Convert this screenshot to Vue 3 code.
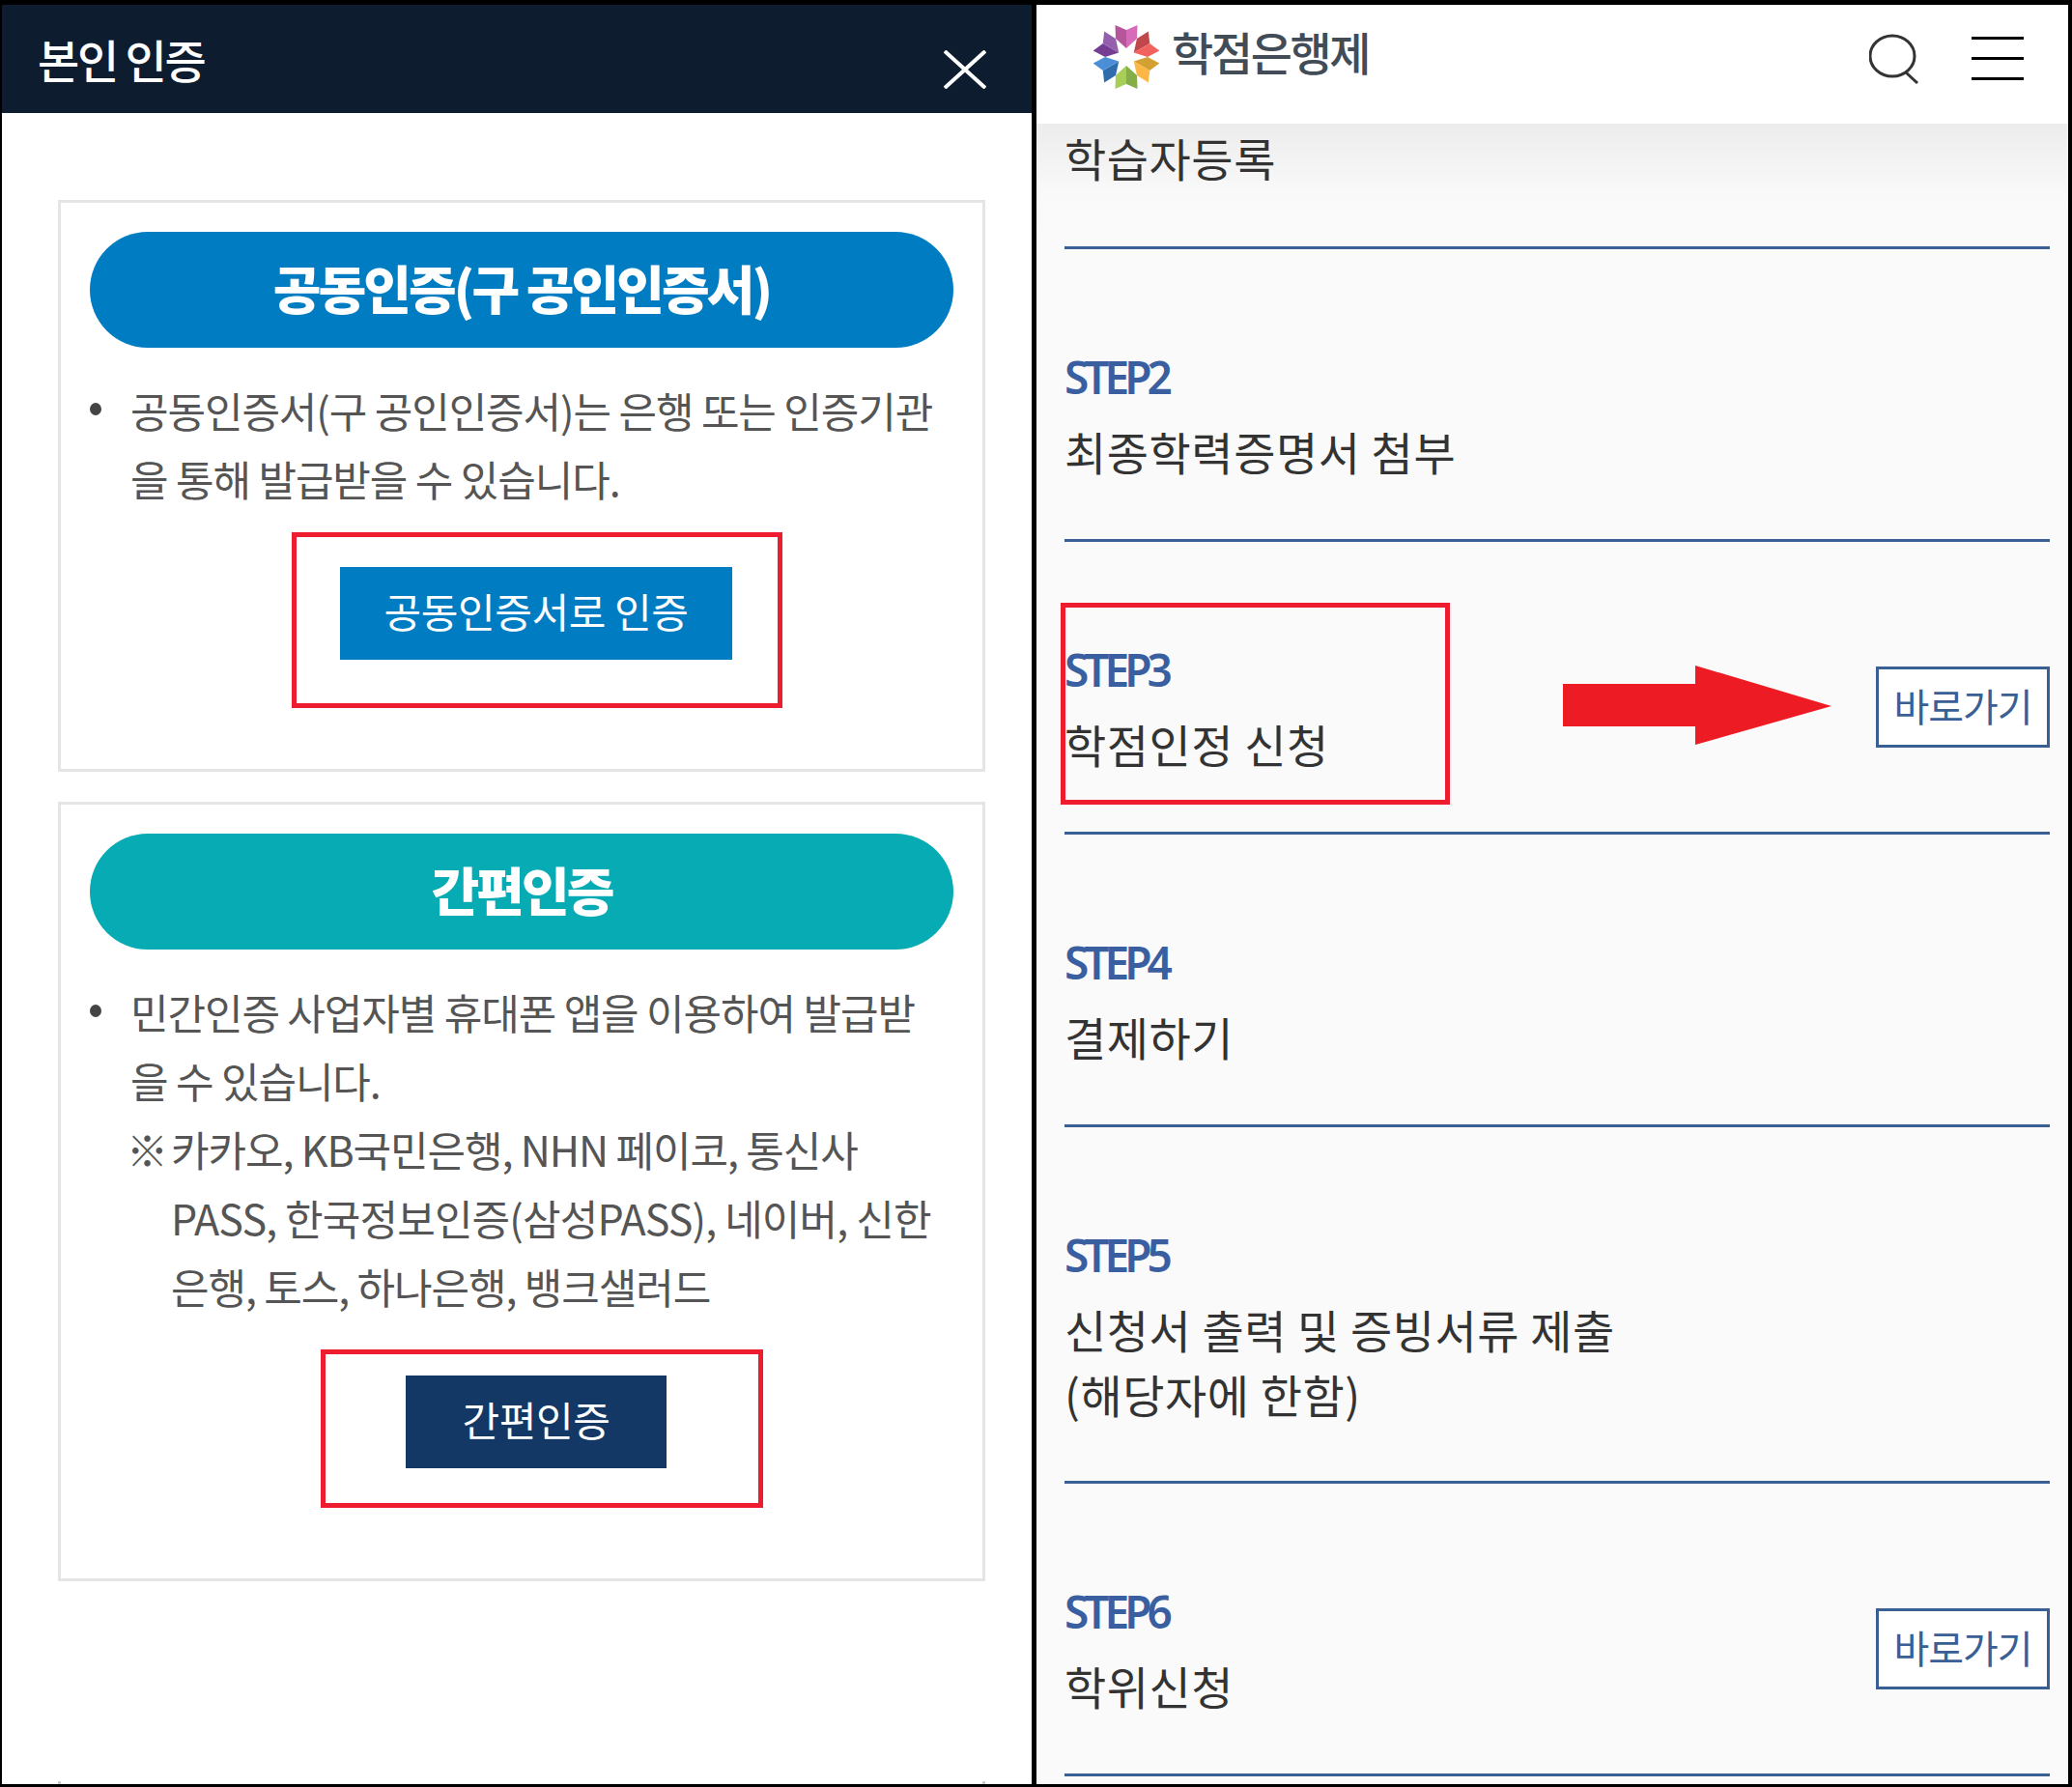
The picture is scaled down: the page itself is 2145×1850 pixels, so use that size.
<script setup>
const petals = [
  { r: 0, a: '#b5559a', b: '#d66cb8' },
  { r: 60, a: '#c2474c', b: '#f2635f' },
  { r: 120, a: '#d3a032', b: '#fdb747' },
  { r: 180, a: '#85ae48', b: '#a7cf57' },
  { r: 240, a: '#2f6cae', b: '#4a8fd6' },
  { r: 300, a: '#753e92', b: '#9460ad' },
]
const firstLines = ['공동인증서(구 공인인증서)는 은행 또는 인증기관', '을 통해 발급받을 수 있습니다.']
const secondLines = ['민간인증 사업자별 휴대폰 앱을 이용하여 발급받', '을 수 있습니다.']
const noteLines = ['카카오, KB국민은행, NHN 페이코, 통신사', 'PASS, 한국정보인증(삼성PASS), 네이버, 신한', '은행, 토스, 하나은행, 뱅크샐러드']
const steps = [
  { id: 2, lines: ['최종학력증명서 첨부'] },
  { id: 3, lines: ['학점인정 신청'], link: true, mark: true },
  { id: 4, lines: ['결제하기'] },
  { id: 5, lines: ['신청서 출력 및 증빙서류 제출', '(해당자에 한함)'], tall: true },
  { id: 6, lines: ['학위신청'], link: true },
]
</script>

<template>
  <div class="frame">
    <section class="left">
      <header class="modal-head">
        <h1>본인 인증</h1>
        <svg class="close" viewBox="0 0 44 40" width="44" height="40">
          <path d="M1 1 L43 39 M43 1 L1 39" stroke="#fff" stroke-width="4" fill="none" />
        </svg>
      </header>
      <div class="modal-body">
        <div class="card card-one">
          <div class="pill pill-blue">공동인증(구 공인인증서)</div>
          <div class="bullet-block">
            <i class="dot"></i>
            <p v-for="l in firstLines" :key="l">{{ l }}</p>
          </div>
          <div class="mark mark-one"><a class="btn btn-blue">공동인증서로 인증</a></div>
        </div>
        <div class="card card-two">
          <div class="pill pill-teal">간편인증</div>
          <div class="bullet-block">
            <i class="dot"></i>
            <p v-for="l in secondLines" :key="l">{{ l }}</p>
            <div class="note">
              <span class="ref">※</span>
              <p v-for="l in noteLines" :key="l">{{ l }}</p>
            </div>
          </div>
          <div class="mark mark-two"><a class="btn btn-navy">간편인증</a></div>
        </div>
        <div class="stub"></div>
      </div>
    </section>

    <section class="right">
      <header class="site-head">
        <div class="logo">
          <svg viewBox="-36 -36 72 72" width="72" height="72">
            <g v-for="p in petals" :key="p.r" :transform="`rotate(${p.r})`">
              <polygon points="0,-9 0,-28 -11.5,-33 -11,-19" :fill="p.a" />
              <polygon points="0,-9 0,-28 11.5,-33 11,-19" :fill="p.b" />
            </g>
          </svg>
          <span>학점은행제</span>
        </div>
        <div class="head-icons">
          <svg viewBox="0 0 52 52" width="52" height="52">
            <ellipse cx="24" cy="23" rx="23" ry="21" fill="none" stroke="#333" stroke-width="3" />
            <path d="M38 40 L50 51" stroke="#333" stroke-width="3" fill="none" />
          </svg>
          <div class="burger"><i></i><i></i><i></i></div>
        </div>
      </header>
      <div class="steps">
        <div class="step first"><p class="label">학습자등록</p></div>
        <div v-for="s in steps" :key="s.id" class="step" :class="{ tall: s.tall }">
          <div class="step-text">
            <b class="step-no">STEP{{ s.id }}</b>
            <p v-for="l in s.lines" :key="l" class="label">{{ l }}</p>
          </div>
          <template v-if="s.mark">
            <div class="step-mark"></div>
            <svg class="arrow" viewBox="0 0 278 82" width="278" height="82">
              <path d="M0 19 H137 V0 L278 42 L137 82 V63 H0 Z" fill="#ed1c24" />
            </svg>
          </template>
          <a v-if="s.link" class="go">바로가기</a>
        </div>
      </div>
    </section>
  </div>
</template>

<style>
html, body { margin: 0; background: #000; }
</style>

<style scoped>
* { box-sizing: border-box; }
.frame {
  width: 2145px;
  height: 1850px;
  background: #000;
  padding: 5px 4px 3px 2px;
  display: grid;
  grid-template-columns: 1066px 1068px;
  column-gap: 5px;
  font-family: "Noto Sans CJK KR", "Noto Sans", sans-serif;
  overflow: hidden;
}
p, h1 { margin: 0; font-weight: 400; }
.left { background: #fff; display: flex; flex-direction: column; overflow: hidden; }
.modal-head {
  height: 112px;
  background: #0e1c30;
  display: flex;
  justify-content: space-between;
  padding: 0 47px 0 37px;
}
.modal-head h1 {
  color: #fff;
  font-size: 47px;
  font-weight: 500;
  line-height: 112px;
  letter-spacing: -2.2px;
}
.close { margin-top: 47px; }
.modal-body { padding: 90px 48px 0 58px; flex: 1; }
.card { border: 3px solid #e5e5e5; padding: 30px 30px 0; }
.card-one { height: 592px; }
.card-two { height: 807px; margin-top: 31px; }
.stub { height: 3px; margin-top: 207px; border-left: 3px solid #ccc; border-right: 3px solid #ccc; }
.pill {
  height: 120px;
  border-radius: 60px;
  color: #fff;
  text-align: center;
  font-size: 54px;
  line-height: 116px;
  font-weight: 900;
  letter-spacing: -2.9px;
}
.pill-blue { background: #007cc3; }
.pill-teal { background: #07abb3; }
.bullet-block {
  position: relative;
  padding-left: 42px;
  margin-top: 29px;
  color: #555;
  font-size: 43px;
  line-height: 71px;
  letter-spacing: -1.1px;
  white-space: nowrap;
}
.dot {
  position: absolute;
  left: 0;
  top: 28px;
  width: 12px;
  height: 13px;
  border-radius: 50%;
  background: #444;
}
.note { position: relative; padding-left: 42px; }
.note p:nth-of-type(2) { letter-spacing: -.85px; }
.ref { position: absolute; left: -4px; top: 0; }
.mark { border: 5px solid #ed1c2e; display: flex; justify-content: center; }
.mark-one { width: 508px; height: 182px; margin: 20px 0 0 209px; padding-top: 31px; }
.mark-two { width: 458px; height: 164px; margin: 30px 0 0 239px; padding-top: 22px; }
.btn {
  height: 96px;
  color: #fff;
  font-size: 42px;
  line-height: 90px;
  text-align: center;
  letter-spacing: -0.4px;
}
.btn-blue { width: 406px; margin-right: 2px; background: #007cc3; }
.btn-navy { width: 270px; margin-right: 12px; background: #143865; }

.right { background: #fafafb; display: flex; flex-direction: column; overflow: hidden; }
.site-head {
  height: 123px;
  background: #fff;
  display: flex;
  justify-content: space-between;
  padding: 18px 46px 0 57px;
  flex: none;
}
.logo { display: flex; align-items: flex-start; gap: 11px; }
.logo span {
  font-size: 47px;
  line-height: 60px;
  font-weight: 500;
  letter-spacing: -2.4px;
  color: #414c57;
}
.head-icons { display: flex; gap: 54px; padding-top: 12px; }
.burger { width: 54px; height: 45px; margin-top: 3px; display: flex; flex-direction: column; justify-content: space-between; }
.burger i { display: block; height: 3px; background: #000; }
.steps {
  flex: 1;
  padding: 0 19px 0 29px;
  background: linear-gradient(#ececec 0, #f9f9f9 70px, #fafafb 120px) no-repeat;
}
.step {
  position: relative;
  height: 303px;
  border-bottom: 3px solid #3a5f95;
  display: flex;
  justify-content: space-between;
  align-items: center;
}
.step.first { height: 130px; align-items: flex-start; padding-top: 1px; }
.step.tall { height: 369px; }
.step-text { align-self: flex-start; padding-top: 102px; }
.step-no {
  display: block;
  color: #3a5fa0;
  font-family: "Noto Sans", sans-serif;
  font-size: 46px;
  line-height: 60px;
  font-weight: 600;
  letter-spacing: -5px;
}
.label {
  color: #333;
  font-size: 47px;
  line-height: 67px;
  letter-spacing: 0.55px;
  white-space: nowrap;
}
.step-text .step-no + .label { margin-top: 13px; }
.step-mark {
  position: absolute;
  left: -4px;
  top: 63px;
  width: 403px;
  height: 209px;
  border: 5px solid #ed1c2e;
}
.arrow { position: absolute; left: 516px; top: 128px; }
.go {
  margin-top: 42px;
  width: 180px;
  height: 84px;
  border: 3px solid #3a5f95;
  background: #fff;
  color: #3a5f95;
  font-size: 40px;
  line-height: 74px;
  text-align: center;
  letter-spacing: -1.1px;
}
</style>
